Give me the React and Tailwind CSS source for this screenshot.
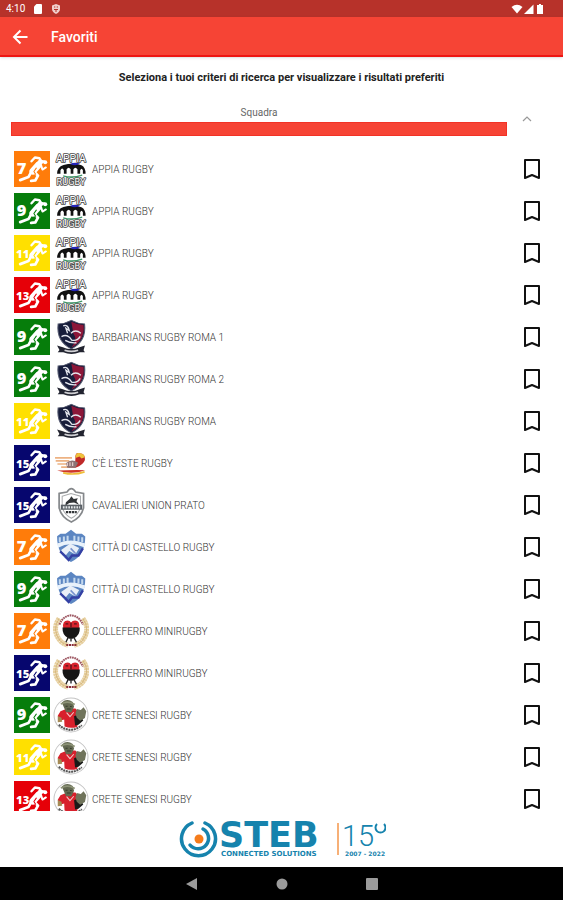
import { useState } from 'react';

const TEAMS = [
  { age: 7, logo: 'appia', name: 'APPIA RUGBY' },
  { age: 9, logo: 'appia', name: 'APPIA RUGBY' },
  { age: 11, logo: 'appia', name: 'APPIA RUGBY' },
  { age: 13, logo: 'appia', name: 'APPIA RUGBY' },
  { age: 9, logo: 'barbarians', name: 'BARBARIANS RUGBY ROMA 1' },
  { age: 9, logo: 'barbarians', name: 'BARBARIANS RUGBY ROMA 2' },
  { age: 11, logo: 'barbarians', name: 'BARBARIANS RUGBY ROMA' },
  { age: 15, logo: 'este', name: "C'È L'ESTE RUGBY" },
  { age: 15, logo: 'cavalieri', name: 'CAVALIERI UNION PRATO' },
  { age: 7, logo: 'castello', name: 'CITTÀ DI CASTELLO RUGBY' },
  { age: 9, logo: 'castello', name: 'CITTÀ DI CASTELLO RUGBY' },
  { age: 7, logo: 'colleferro', name: 'COLLEFERRO MINIRUGBY' },
  { age: 15, logo: 'colleferro', name: 'COLLEFERRO MINIRUGBY' },
  { age: 9, logo: 'crete', name: 'CRETE SENESI RUGBY' },
  { age: 11, logo: 'crete', name: 'CRETE SENESI RUGBY' },
  { age: 13, logo: 'crete', name: 'CRETE SENESI RUGBY' },
];

const AGE_COLORS = {
  7: '#ff7c0a',
  9: '#067d0b',
  11: '#ffe000',
  13: '#e60008',
  15: '#06066e',
};

function AgeBadge({ age }) {
  const color = AGE_COLORS[age];
  const wide = age > 9;

  return (
    <svg viewBox="0 0 105 105" className="size-9 shrink-0" role="img" aria-label={`Under ${age}`}>
      <rect width="105" height="105" fill={color} />
      <text
        x={wide ? 6 : 8}
        y={wide ? 66 : 68}
        fontFamily="Open Sans, sans-serif"
        fontWeight="800"
        fontSize={wide ? 33 : 48}
        fill="#fff"
      >
        {age}
      </text>
      {/* running player */}
      <g fill="none" strokeLinecap="round" strokeLinejoin="round">
        <path d="M73 36 L56 56 L44 75 L18 85" stroke={color} strokeWidth="15" />
        <path d="M51 30 L61 19 L74 21 L82 33" stroke="#fff" strokeWidth="7" />
        <path d="M76 33 L68 43" stroke="#fff" strokeWidth="15" />
        <path d="M70 42 L55 59" stroke="#fff" strokeWidth="20" />
        <path d="M50 62 L42 76 L18 85" stroke="#fff" strokeWidth="8" />
        <path d="M58 60 L70 72 L62 86 L50 87" stroke="#fff" strokeWidth="8" />
        <path d="M79 42 L83 54 L93 48" stroke="#fff" strokeWidth="6" />
        <path d="M65 50 L58 60 L63 68" stroke={color} strokeWidth="3" />
      </g>
      <circle cx="91" cy="33" r="6" fill="#fff" />
      <path d="M81 29 L90 31" stroke="#fff" strokeWidth="6" />
    </svg>
  );
}

function AppiaLogo() {
  return (
    <g>
      <g fontFamily="Roboto, sans-serif" fontWeight="400" textAnchor="middle" fill="#fff" stroke="#4a4a4a" strokeWidth="5" paintOrder="stroke" strokeLinejoin="round">
        <text x="53" y="32" fontSize="31">APPIA</text>
        <text x="53" y="101" fontSize="27">RUGBY</text>
      </g>
      <path d="M12 67 Q12 47 31 41 Q60 34 84 42 Q96 48 96 67 Z" fill="#111" />
      <path d="M22 70 V57 Q27 46 32 57 V70 Z M40 70 V54 Q46 44 52 54 V70 Z M60 70 V54 Q66 44 72 54 V70 Z M80 70 V57 Q84 47 88 57 V70 Z" fill="#fff" />
      <path d="M50 38 Q64 32 80 37 Q66 47 50 38Z" fill="#2424b8" />
      <path d="M30 73 Q56 81 86 71" fill="none" stroke="#409668" strokeWidth="4" />
    </g>
  );
}

function BarbariansLogo() {
  return (
    <g>
      <path d="M15 15 Q36 14 54 4 Q72 14 93 15 Q99 66 54 88 Q9 66 15 15Z" fill="#171d3b" stroke="#555a70" strokeWidth="3" />
      <path d="M54 8 Q72 17 90 18 Q95 64 54 84 Q74 61 60 43Z" fill="#8c1739" />
      <path d="M30 20 Q44 15 48 34 L38 27 L43 42 M25 52 Q42 42 55 62 Q72 66 80 51 M53 42 Q66 29 82 42 M36 63 Q51 72 69 70" fill="none" stroke="#e4e6ee" strokeWidth="4" />
      <path d="M12 78 L29 83 Q54 94 78 83 L94 78 L90 92 L94 98 L79 98 Q54 108 30 98 L14 98 L19 91Z" fill="#222430" />
      <path d="M34 92 Q54 99 74 92" fill="none" stroke="#d0d0d4" strokeWidth="5" />
    </g>
  );
}

function EsteLogo() {
  return (
    <g>
      <path d="M6 38 H56 M8 47 H48 M13 56 H46 M24 65 H50" stroke="#edb283" strokeWidth="5" />
      <path d="M66 40 Q64 20 78 24 Q96 24 94 44 Q90 58 66 67 L45 66 Q68 58 66 40Z" fill="#bf2929" />
      <path d="M66 38 Q66 20 80 24 Q92 26 94 36 L84 40 L78 34Z" fill="#efc23b" />
      <path d="M38 54 Q54 39 74 52 L66 67 H42Z" fill="#8e7475" />
      <path d="M42 62 V53 M50 62 V51 M58 62 V51" stroke="#f2dddd" strokeWidth="3" />
      <path d="M12 75 Q56 89 95 74 Q60 73 12 75Z" fill="#cf3628" />
      <path d="M30 82 Q62 90 93 79" fill="none" stroke="#efbd37" strokeWidth="5" />
    </g>
  );
}

function CavalieriLogo() {
  return (
    <g>
      <path d="M18 19 L41 15 Q54 -5 67 15 L90 19 V61 Q84 89 54 103 Q24 89 18 61Z" fill="#fff" stroke="#85888b" strokeWidth="5" />
      <path d="M27 27 L53 19 L81 27 V60 Q75 81 54 92 Q33 81 27 60Z" fill="none" stroke="#a9abad" strokeWidth="3" />
      <path d="M38 45 L49 35 L54 27 L61 35 L73 33 L69 42 L77 52 L62 46 L48 47 L36 55Z" fill="#303336" />
      <path d="M23 52 H86 V67 H23Z" fill="#5a6066" />
      <path d="M29 60 H80" stroke="#e4e8ea" strokeWidth="7" strokeDasharray="5 3" />
      <path d="M38 74 H70" stroke="#303336" strokeWidth="7" strokeDasharray="7 2" />
    </g>
  );
}

function CastelloLogo() {
  return (
    <g>
      <path d="M12 21 L22 14 L37 14 L53 2 L68 14 L85 14 L95 22 Q95 78 53 97 Q12 78 12 21Z" fill="#5c86c2" />
      <path d="M20 24 V39 M32 22 V36 M43 20 V35 M63 20 V35 M75 22 V36 M86 24 V39" stroke="#c5d9ee" strokeWidth="6" />
      <path d="M12 43 Q52 25 95 43 L91 54 Q51 36 15 55Z" fill="#e9f2fb" />
      <path d="M24 62 L51 43 L77 56 L66 75 L48 65 L33 83Z" fill="#eaf0f8" />
      <path d="M21 66 Q37 80 46 91 L56 78 L75 78 L88 57" fill="none" stroke="#3440a4" strokeWidth="7" />
      <path d="M52 57 L67 73" stroke="#7892ce" strokeWidth="5" />
    </g>
  );
}

function ColleferroLogo() {
  return (
    <g>
      <path d="M18 16 Q-5 50 22 83 Q31 91 44 95 M88 16 Q112 50 85 83 Q76 91 62 95" fill="none" stroke="#e6cf9e" strokeWidth="15" strokeDasharray="7 1" />
      <path d="M18 16 Q-5 50 22 83 Q31 91 44 95 M88 16 Q112 50 85 83 Q76 91 62 95" fill="none" stroke="#cdab6b" strokeWidth="2" />
      <path d="M19 34 Q30 8 53 7 Q76 8 88 34" fill="none" stroke="#9c5560" strokeWidth="6" strokeDasharray="5 2" />
      <path d="M30 44 Q27 22 43 22 Q50 22 53 28 Q57 22 65 22 Q80 22 77 44Z" fill="#d8232d" />
      <path d="M37 32 H45 M62 32 H70 M53 29 V42" stroke="#54141a" strokeWidth="4" />
      <path d="M28 43 H79 Q80 68 61 74 Q53 78 45 74 Q27 67 28 43Z" fill="#161616" />
      <path d="M45 71 L38 86 M61 71 L69 86 M53 74 V84" stroke="#222" strokeWidth="4" />
      <path d="M39 94 H69" stroke="#8a3037" strokeWidth="6" strokeDasharray="6 2" />
    </g>
  );
}

function CreteLogo() {
  return (
    <g>
      <circle cx="53" cy="53" r="50" fill="#fff" stroke="#c4c4c4" strokeWidth="3" />
      <path d="M22 42 L42 34 L66 34 L80 49 L71 88 Q52 94 34 87 L33 66 L18 71 L14 55Z" fill="#d8202c" />
      <path d="M62 57 L78 50 L89 69 L75 82 L65 84Z" fill="#181a18" />
      <path d="M26 16 Q42 2 58 15 L62 29 L54 46 L38 44 L31 28Z" fill="#626850" />
      <path d="M23 21 Q42 9 64 22" fill="none" stroke="#8d9377" strokeWidth="5" />
      <path d="M37 27 H43 M50 28 H55 M41 35 H52" stroke="#353b2c" strokeWidth="3" />
      <path d="M66 49 L70 35 L82 38 L90 30 L98 42 L94 62 L80 70 L70 61Z" fill="#70745b" />
      <path d="M14 56 L25 61 L27 73 L14 74Z" fill="#a58a55" />
      <path d="M40 46 L50 58 L61 45" fill="none" stroke="#f3c9c9" strokeWidth="3" />
      <path d="M17 82 Q51 111 85 83" fill="none" stroke="#555" strokeWidth="6" strokeDasharray="6 2" />
    </g>
  );
}

const LOGOS = {
  appia: AppiaLogo,
  barbarians: BarbariansLogo,
  este: EsteLogo,
  cavalieri: CavalieriLogo,
  castello: CastelloLogo,
  colleferro: ColleferroLogo,
  crete: CreteLogo,
};

function TeamRow({ team }) {
  const [saved, setSaved] = useState(false);
  const Logo = LOGOS[team.logo];

  return (
    <li className="flex h-[42px] shrink-0 items-center pl-3.5 pr-[19px]">
      <AgeBadge age={team.age} />
      <svg viewBox="0 0 106 106" className="ml-[3px] size-9 shrink-0" aria-hidden="true">
        <Logo />
      </svg>
      <span className="ml-[3px] flex-1 text-[10px] font-light text-[#333]">{team.name}</span>
      <button
        type="button"
        aria-label={`Salva ${team.name}`}
        aria-pressed={saved}
        onClick={() => setSaved(!saved)}
      >
        <svg viewBox="0 0 24 24" className="size-6" fill={saved ? '#111' : 'none'} stroke="#111" strokeWidth="2" strokeLinejoin="round">
          <path d="M5 3 H19 V21 L12 18 L5 21 Z" />
        </svg>
      </button>
    </li>
  );
}

function StatusBar() {
  return (
    <div className="flex h-[17px] shrink-0 items-center bg-[#b7322a] pl-1.5 pr-[18px] text-[10px] text-white">
      <span>4:10</span>
      <svg viewBox="0 0 10 10" className="ml-2 size-[10px]" fill="#fff">
        <path d="M3.5 0 H8 Q9 0 9 1 V9 Q9 10 8 10 H2 Q1 10 1 9 V2.5Z" />
      </svg>
      <svg viewBox="0 0 10 10" className="ml-2 size-[10px]">
        <path d="M5 0 L9 1.5 V5 Q9 8 5 10 Q1 8 1 5 V1.5Z" fill="#f0cfcc" />
        <path d="M3 3 H4.3 M5.7 3 H7 M3 5.5 H7 M5 5.5 V8" stroke="#b7322a" strokeWidth="1" />
      </svg>
      <div className="ml-auto flex items-center gap-px">
        <svg viewBox="0 0 12 10" className="h-[10px] w-3" fill="#fff">
          <path d="M0.5 3 Q6 -1.5 11.5 3 L6 9.5Z" />
        </svg>
        <svg viewBox="0 0 10 10" className="size-[10px]" fill="#fff">
          <path d="M0 10 L9.5 0.5 V10Z" />
        </svg>
        <svg viewBox="0 0 10 10" className="size-[10px]" fill="#fff">
          <path d="M4 0 H6 V1 H8 V10 H2 V1 H4Z" />
        </svg>
      </div>
    </div>
  );
}

function StebLogo() {
  return (
    <svg viewBox="0 -6 208 52" className="h-[52px] w-[208px]" role="img" aria-label="STEB Connected Solutions">
      <g fill="none" stroke="#1683ad" strokeLinecap="round">
        <path d="M14 4 A17 17 0 1 0 27 4" strokeWidth="3.5" />
        <path d="M25 10 A10.5 10.5 0 1 1 12 26" strokeWidth="3.5" />
      </g>
      <circle cx="21" cy="20" r="4.5" fill="#f57c1b" />
      <text x="41" y="28" fontFamily="DejaVu Sans, sans-serif" fontWeight="700" fontSize="35" fill="#1683ad">STEB</text>
      <text x="43" y="37" fontFamily="DejaVu Sans, sans-serif" fontWeight="700" fontSize="7" fill="#1683ad">CONNECTED SOLUTIONS</text>
      <path d="M160 4 V36" stroke="#f5964a" strokeWidth="1.5" />
      <text x="164" y="27" fontFamily="Roboto, sans-serif" fontWeight="300" fontSize="29" fill="#1683ad">15</text>
      <path d="M199 5 A5 5 0 1 0 206 5" fill="none" stroke="#1683ad" strokeWidth="2" />
      <text x="167" y="37" fontFamily="DejaVu Sans, sans-serif" fontWeight="700" fontSize="6" fill="#1683ad">2007 - 2022</text>
    </svg>
  );
}

export default function App() {
  const [open, setOpen] = useState(true);

  return (
    <div className="flex h-screen flex-col overflow-hidden bg-white font-['Roboto',sans-serif]">
      <StatusBar />

      <header className="z-10 flex h-10 shrink-0 items-center border-b-2 border-[#ee1512] bg-[#f64435] pl-3 pt-0.5 text-white shadow">
        <button type="button" aria-label="Indietro">
          <svg viewBox="0 0 16 16" className="size-4" fill="none" stroke="#fff" strokeWidth="2">
            <path d="M15.5 8 H2 M8.5 1.5 L2 8 L8.5 14.5" />
          </svg>
        </button>
        <h1 className="ml-[23px] text-[14px] font-medium">Favoriti</h1>
      </header>

      <main className="flex min-h-0 flex-1 flex-col">
        <p className="mt-[13px] text-center text-[11px] leading-4 font-bold text-[#222]">
          Seleziona i tuoi criteri di ricerca per visualizzare i risultati preferiti
        </p>

        <div className="mt-[19px] flex shrink-0 items-center pl-[11px]">
          <div className="flex-1">
            <h2 className="text-center text-[10px] leading-4 text-[#666]">Squadra</h2>
            <div className="mt-px h-[14px] border border-[#f23226] bg-[#f64435]" />
          </div>
          <button
            type="button"
            aria-label="Squadra"
            aria-expanded={open}
            onClick={() => setOpen(!open)}
            className="mb-1 flex w-14 items-center pl-[15px]"
          >
            <svg viewBox="0 0 10 10" className="size-[10px]" fill="none" stroke="#999" strokeWidth="1.2">
              <path d={open ? 'M1 7 L5 3 L9 7' : 'M1 3 L5 7 L9 3'} />
            </svg>
          </button>
        </div>

        {open && (
          <ul className="mt-3 flex min-h-0 flex-1 flex-col overflow-hidden">
            {TEAMS.map((team, index) => (
              <TeamRow key={index} team={team} />
            ))}
          </ul>
        )}
      </main>

      <footer className="mt-auto flex h-14 shrink-0 items-center justify-center">
        <StebLogo />
      </footer>

      <nav className="flex h-[33px] shrink-0 items-center justify-center gap-[78px] bg-black">
        <button type="button" aria-label="Indietro">
          <svg viewBox="0 0 12 12" className="size-3" fill="#9b9b9b">
            <path d="M0 6 L11 0 V12Z" />
          </svg>
        </button>
        <button type="button" aria-label="Home">
          <svg viewBox="0 0 12 12" className="size-3" fill="#9b9b9b">
            <circle cx="6" cy="6" r="5.5" />
          </svg>
        </button>
        <button type="button" aria-label="Recenti">
          <svg viewBox="0 0 12 12" className="size-3" fill="#9b9b9b">
            <rect width="12" height="12" rx="1" />
          </svg>
        </button>
      </nav>
    </div>
  );
}
